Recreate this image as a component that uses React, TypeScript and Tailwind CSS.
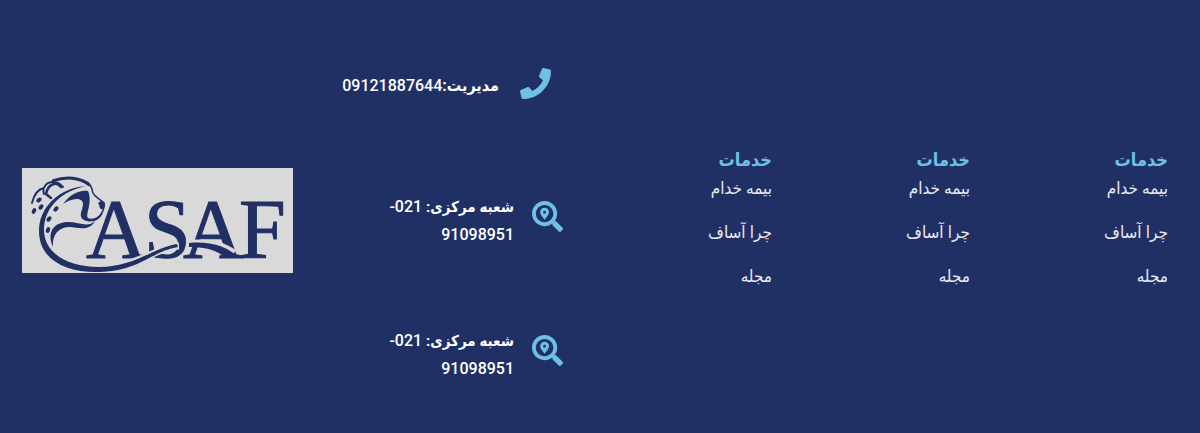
import { FaPhone, FaSearchLocation } from "react-icons/fa";

const menus = [1, 2, 3];
const links = ["بیمه خدام", "چرا آساف", "مجله"];

function Logo() {
  return (
    <svg
      viewBox="0 0 271 105"
      direction="ltr"
      className="block w-full overflow-visible bg-[#d9d9d9] text-[#213064]"
      role="img"
      aria-label="ASAF"
    >
      <g fill="currentColor" fontFamily="'Liberation Serif', serif" fontSize="84" stroke="currentColor" strokeWidth="1">
        <text x="64" y="90">A</text>
        <text x="122" y="90">S</text>
        <text x="161" y="90">A</text>
        <text x="217" y="90">F</text>
      </g>
      <g fill="none" stroke="#d9d9d9">
        <path d="M110 94C130 88 140 79 157 78" strokeWidth="7" />
        <path d="M164 74C184 72 200 74 213 84" strokeWidth="4" />
      </g>
      <g fill="currentColor">
        <path d="M64 18C37 20 17 39 17 63C17 91 43 105 77 104C118 103 130 83 156 79L155 76C131 80 112 99 77 99C44 99 22 84 22 62C22 39 40 23 64 18Z" />
        <path d="M167 75C190 73 206 79 217 90H204C193 81 182 79 167 79Z" />
        <path d="M41 36C48 27 56 22 66 23C71 34 63 47 66 50C71 52 77 49 81 44C78 54 68 55 62 52C54 48 64 38 60 33C56 29 47 32 41 36Z" />
        <path d="M31 79C24 63 33 54 46 54C57 54 66 60 73 53C68 63 57 60 48 59C36 59 30 67 31 79Z" />
        <path d="M76 35C79 32 83 33 83 36C83 39 81 42 79 41C77 40 78 37 76 35Z" />
      </g>
      <g fill="none" stroke="currentColor" strokeLinecap="round">
        <path d="M31 12C46 7 67 9 70 21C70 28 77 30 82 35C83 41 79 47 75 51" strokeWidth="1.5" />
        <path d="M31 13C43 9 57 9 67 17" strokeWidth="2.5" />
        <path d="M39 19C34 13 26 16 24 26L29 30" strokeWidth="2.5" />
        <path d="M22 26C20 20 24 14 31 14C36 14 38 16 41 19M10 35C12 27 16 21 22 20" strokeWidth="2" />
      </g>
      <g fill="currentColor">
        <ellipse cx="17" cy="32" rx="3" ry="2" transform="rotate(-35 17 32)" />
        <ellipse cx="12" cy="43" rx="2" ry="3" transform="rotate(25 12 43)" />
        <ellipse cx="19" cy="39" rx="2" ry="3" transform="rotate(35 19 39)" />
        <ellipse cx="34" cy="41" rx="2" ry="3" transform="rotate(40 34 41)" />
        <ellipse cx="27" cy="51" rx="2" ry="3" transform="rotate(35 27 51)" />
        <ellipse cx="26" cy="62" rx="2" ry="3" transform="rotate(20 26 62)" />
      </g>
    </svg>
  );
}

function Branch() {
  return (
    <div className="flex items-start gap-[18px]">
      <FaSearchLocation className="mt-2 size-[31px] shrink-0 text-[#6ec1e4]" />
      <p className="w-[132px]">
        <strong className="text-[15px]">شعبه مرکزی:</strong> 021-
        <wbr />
        91098951
      </p>
    </div>
  );
}

export default function App() {
  return (
    <footer
      dir="rtl"
      lang="fa"
      className="grid grid-cols-[198fr_198fr_198fr_281fr_271fr] bg-[#213064] pr-8 pl-[22px] font-['Roboto','DejaVu_Sans_Condensed','DejaVu_Sans',sans-serif] text-base text-white"
    >
      {menus.map((menu) => (
        <nav key={menu} className="pt-[146px]">
          <h2 className="text-lg leading-7 font-bold text-[#6ec1e4]">خدمات</h2>
          <ul className="flex flex-col gap-4 text-[17px] leading-7 text-white/90">
            {links.map((link) => (
              <li key={link}>
                <a href="#">{link}</a>
              </li>
            ))}
          </ul>
        </nav>
      ))}
      <address className="pt-[68px] pr-[11px] pb-[52px] leading-[27px] font-medium not-italic">
        <div className="mb-[94px] flex items-start gap-[21px] pr-3">
          <FaPhone className="size-[31px] shrink-0 text-[#6ec1e4]" />
          <p className="pt-1 whitespace-nowrap">
            <strong>مدیریت:</strong>09121887644
          </p>
        </div>
        <div className="flex flex-col gap-[79px]">
          <Branch />
          <Branch />
        </div>
      </address>
      <div className="pt-[168px]">
        <Logo />
      </div>
    </footer>
  );
}
